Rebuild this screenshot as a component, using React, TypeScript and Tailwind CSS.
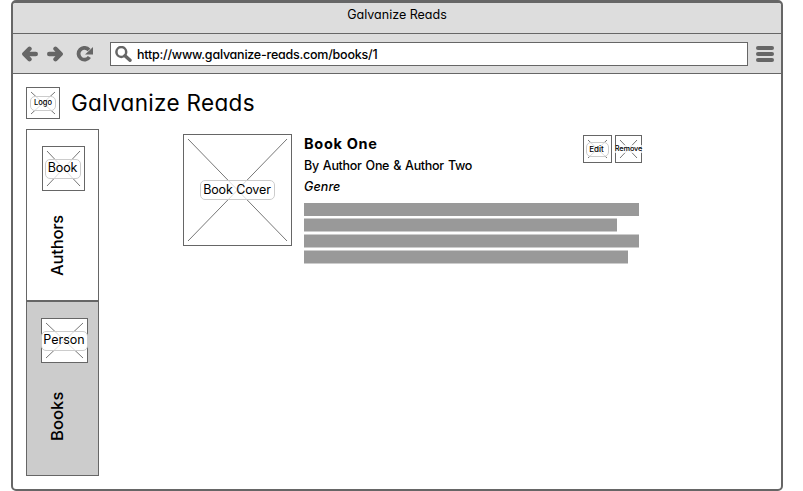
import type { ReactNode } from "react";

type PlaceholderProps = {
  width: number;
  height: number;
  inset?: number;
  className: string;
  labelClass: string;
  children: ReactNode;
};

function Placeholder({ width, height, inset = 5, className, labelClass, children }: PlaceholderProps) {
  const r = width - inset;
  const b = height - inset;
  return (
    <div className={`relative flex shrink-0 items-center justify-center bg-white ${className}`}>
      <svg className="absolute inset-0 h-full w-full" viewBox={`0 0 ${width} ${height}`} fill="none">
        <path d={`M${inset} ${inset}L${r} ${b}M${r} ${inset}L${inset} ${b}`} stroke="#777" />
      </svg>
      <span className="pointer-events-none absolute inset-0 border border-[#666]" />
      <span className={`relative flex shrink-0 items-center justify-center whitespace-nowrap border-[#ccc] bg-white/75 ${labelClass}`}>
        {children}
      </span>
    </div>
  );
}

function Toolbar() {
  return (
    <div className="flex h-10 items-center border-b border-[#666] bg-[#ddd] pl-[9px] pr-[7px]">
      <svg className="h-4 w-[17px] shrink-0" viewBox="0 0 17 16" fill="none" stroke="#666" strokeWidth="4.400" strokeLinecap="round" strokeLinejoin="round">
        <path d="M7.500 2.800L2.300 8l5.200 5.200M3 8H13.800" />
      </svg>
      <svg className="ml-2 h-4 w-[17px] shrink-0" viewBox="0 0 17 16" fill="none" stroke="#666" strokeWidth="4.400" strokeLinecap="round" strokeLinejoin="round">
        <path d="M8.500 2.800L13.700 8l-5.200 5.200M13 8H2.200" />
      </svg>
      <svg className="ml-[12px] h-4 w-[18px] shrink-0" viewBox="0 0 18 16">
        <path d="M13 4A5.900 5.900 0 1 0 13.400 11" fill="none" stroke="#666" strokeWidth="3.800" />
        <path d="M17 1V8.500H9Z" fill="#666" />
      </svg>
      <div className="ml-[16px] flex h-6 flex-1 items-center border border-[#666] bg-white pl-1">
        <svg className="h-4 w-[17px]" viewBox="0 0 17 16" fill="none" stroke="#666">
          <circle cx="6.300" cy="6" r="4.900" strokeWidth="2.500" />
          <path d="M10 9.700l5 4.600" strokeWidth="3.400" strokeLinecap="round" />
        </svg>
        <span className="ml-[5px] mt-[2px] whitespace-nowrap text-[12.5px] font-medium leading-5 tracking-[-0.23px]">http://www.galvanize-reads.com/books/1</span>
      </div>
      <div className="ml-2 flex w-[18px] flex-col gap-[2px]">
        <i className="h-1 rounded-full bg-[#666]" />
        <i className="h-1 rounded-full bg-[#666]" />
        <i className="h-1 rounded-full bg-[#666]" />
      </div>
    </div>
  );
}

function Sidebar() {
  return (
    <nav className="flex w-[73px] flex-col">
      <div className="flex h-[172px] flex-col items-center border border-[#666] bg-white pt-4">
        <Placeholder width={43} height={45} className="ml-px h-[45px] w-[43px]" labelClass="h-5 w-9 rounded-[5px] border pr-px pb-px text-[12.5px] tracking-[-0.1px]">Book</Placeholder>
        <span className="mt-[25px] h-[60px] w-6 mr-[11px] rotate-180 whitespace-nowrap text-[16.5px] font-medium leading-6 tracking-[-0.2px] [writing-mode:vertical-rl]">Authors</span>
      </div>
      <div className="flex h-[175px] flex-col items-center border border-[#666] bg-[#ccc] pt-4">
        <Placeholder width={47} height={45} className="ml-[3px] h-[45px] w-[47px]" labelClass="h-5 w-[47px] rounded-[5px] border pb-px text-[12.5px]">Person</Placeholder>
        <span className="mt-[29px] h-[49px] w-6 mr-[11px] rotate-180 whitespace-nowrap text-[16.5px] font-medium leading-6 tracking-[0.1px] [writing-mode:vertical-rl]">Books</span>
      </div>
    </nav>
  );
}

function BookDetails() {
  return (
    <section className="ml-[84px] mt-[5px] flex items-start">
      <Placeholder width={109} height={112} className="h-[112px] w-[109px]" labelClass="h-5 w-[75px] rounded-[5px] border pr-px text-[12.5px] tracking-[-0.1px]">Book Cover</Placeholder>
      <div className="ml-3 w-[279px] whitespace-nowrap">
        <h2 className="h-5 text-[14.5px] font-bold leading-5 tracking-[0.7px]">Book One</h2>
        <p className="mt-[2px] h-5 text-[12.5px] font-medium leading-5 tracking-[-0.3px] [word-spacing:1px]">By Author One &amp; Author Two</p>
        <p className="mt-px h-5 text-[12.5px] font-medium italic leading-5 tracking-[0.1px]">Genre</p>
        <div className="mt-[6px] flex flex-col">
          <div className="h-[13px] w-[335px] bg-[#999]" />
          <div className="mt-[2px] h-[14px] w-[313px] border-y border-[#ccc] bg-[#999]" />
          <div className="mt-[2px] h-[14px] w-[335px] border-y border-[#ccc] bg-[#999]" />
          <div className="mt-[2px] h-[14px] w-[324px] border-y border-[#ccc] bg-[#999]" />
        </div>
      </div>
      <div className="mt-px flex gap-[3px]">
        <Placeholder width={29} height={28} className="h-7 w-[29px]" labelClass="h-[15px] w-[23px] rounded-[5px] border pb-px pr-[2px] text-[8px] font-medium">Edit</Placeholder>
        <Placeholder width={27} height={28} className="h-7 w-[27px]" labelClass="h-[8px] w-[27px] text-[7.3px] font-medium tracking-[-0.1px]">Remove</Placeholder>
      </div>
    </section>
  );
}

export default function App() {
  return (
    <main className="h-[491px] w-[803px] bg-white pl-[11px] text-black [font-family:Inter,'Open_Sans',sans-serif] [font-feature-settings:'cv11']">
      <div className="h-[491px] w-[772px] overflow-hidden rounded-[5px] border-2 border-t-[3px] border-[#666]">
        <header className="flex h-[31px] justify-center border-b border-[#666] bg-[#ddd] pt-[2px]">
          <span className="text-[12.5px] leading-5">Galvanize Reads</span>
        </header>
        <Toolbar />
        <div className="pl-[13px] pt-[13px]">
          <div className="flex h-8 items-center">
            <Placeholder width={34} height={32} className="h-8 w-[34px]" labelClass="h-[15px] w-[26px] rounded-[5px] border pb-px text-[7.5px] font-medium">Logo</Placeholder>
            <h1 className="ml-[11px] whitespace-nowrap text-[22.5px] leading-8 tracking-[0.32px]">Galvanize Reads</h1>
          </div>
          <div className="mt-[10px] flex items-start">
            <Sidebar />
            <BookDetails />
          </div>
        </div>
      </div>
    </main>
  );
}
